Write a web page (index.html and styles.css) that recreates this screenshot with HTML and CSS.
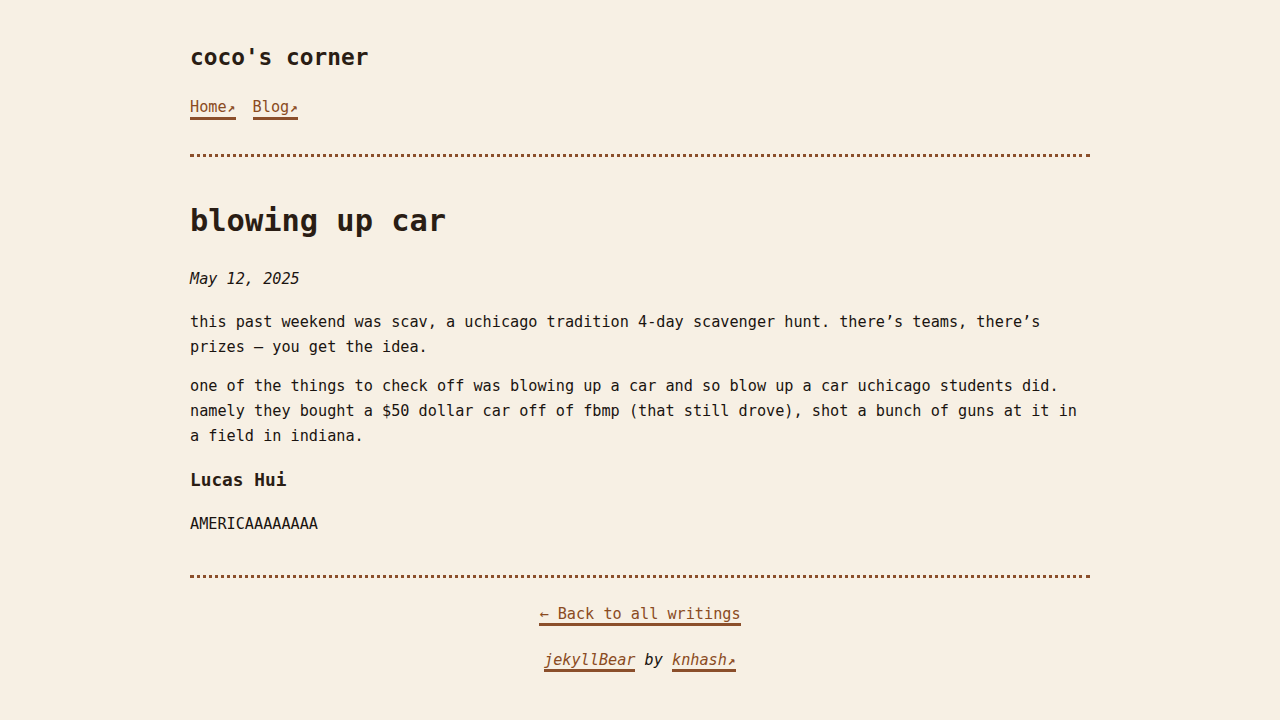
FILE: index.html
```html
<!DOCTYPE html>
<html lang="en">
<head>
<meta charset="utf-8">
<title>blowing up car | coco's corner</title>
<link rel="stylesheet" href="styles.css">
</head>
<body>
<div class="page">
  <header class="site-header">
    <a class="site-title" href="#">coco's corner</a>
    <nav class="site-nav">
      <a class="link ext" href="#">Home</a>
      <a class="link ext" href="#">Blog</a>
    </nav>
  </header>
  <main class="post">
    <h1 class="post-title">blowing up car</h1>
    <p class="post-date"><i>May 12, 2025</i></p>
    <p>this past weekend was scav, a uchicago tradition 4-day scavenger hunt. there’s teams, there’s prizes – you get the idea.</p>
    <p>one of the things to check off was blowing up a car and so blow up a car uchicago students did. namely they bought a $50 dollar car off of fbmp (that still drove), shot a bunch of guns at it in a field in indiana.</p>
    <h3 class="post-sub">Lucas Hui</h3>
    <p>AMERICAAAAAAAA</p>
  </main>
  <footer class="site-footer">
    <div class="back"><a class="link" href="#">← Back to all writings</a></div>
    <div class="credit"><a class="link" href="#">jekyllBear</a> by <a class="link ext" href="#">knhash</a></div>
  </footer>
</div>
</body>
</html>
```
FILE: styles.css
```css
html, body {
  margin: 0;
  padding: 0;
  background: #f7f0e4;
}
body {
  font-family: "DejaVu Sans Mono", "Liberation Mono", monospace;
  font-size: 15.2px;
  line-height: 25px;
  color: #1a1410;
}
.page {
  width: 900px;
  margin: 0 auto;
  padding-top: 42px;
}
.site-header {
  padding-bottom: 34px;
  border-bottom: 3px dotted #8b4f2b;
}
.site-title {
  display: block;
  font-size: 22.8px;
  line-height: 30px;
  font-weight: bold;
  color: #2a1d14;
  text-decoration: none;
}
.site-nav {
  margin-top: 26px;
  display: flex;
  gap: 17px;
  line-height: 18px;
}
.link {
  color: #8a4b22;
  text-decoration: none;
  border-bottom: 3px solid #8b4f2b;
}
.ext::after {
  content: "↗";
  display: inline-block;
  width: 0.7em;
  font-size: 0.85em;
  font-weight: bold;
  font-style: normal;
  text-align: center;
}
.post {
  padding-top: 44px;
  padding-bottom: 24px;
  border-bottom: 3px dotted #8b4f2b;
}
.post-title {
  font-size: 30.4px;
  line-height: 40px;
  font-weight: bold;
  color: #2a1d14;
  margin: 0 0 26px;
}
.post p {
  margin: 0 0 14px;
}
.post .post-date {
  margin-bottom: 18px;
}
.post-sub {
  font-size: 17.8px;
  line-height: 25px;
  font-weight: bold;
  color: #2a1d14;
  margin: 18px 0 20px;
}
.site-footer {
  text-align: center;
  padding-top: 24px;
}
.back {
  margin-bottom: 21px;
}
.credit {
  font-style: italic;
}
```
